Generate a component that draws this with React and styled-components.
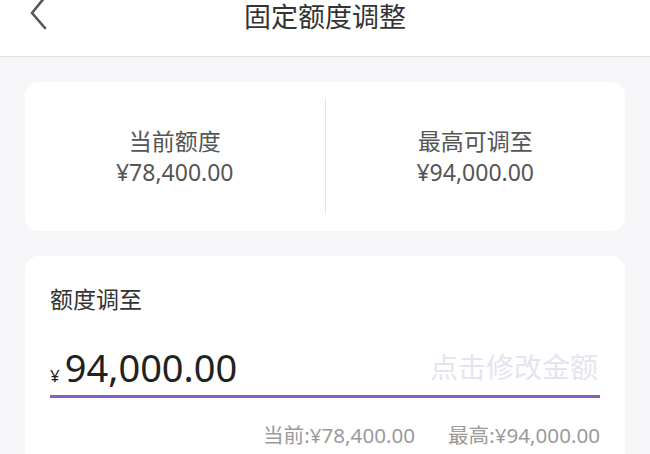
import React from 'react';
import styled, { createGlobalStyle } from 'styled-components';

const GlobalStyle = createGlobalStyle`
    html, body {
        margin: 0;
        padding: 0;
        background: #f6f5f8;
    }
    body {
        font-family: "Noto Sans", "Noto Sans CJK SC", sans-serif;
        overflow: hidden;
    }
`;

const Page = styled.div`
    width: 650px;
    height: 454px;
    background: #f6f5f8;
    overflow: hidden;
`;

const Header = styled.div`
    height: 56px;
    background: #fff;
    border-bottom: 1px solid #e2e2e4;
    display: grid;
    grid-template-columns: 1fr auto 1fr;
    align-items: start;
`;

const BackButton = styled.div`
    padding-left: 29px;
    margin-top: -4px;
    color: #555;
    display: flex;
`;

const Title = styled.h1`
    margin: 0;
    padding-top: 2px;
    font-size: 27px;
    font-weight: 400;
    line-height: 30px;
    color: #333;
`;

const Card = styled.div`
    margin: 25px 25px 0;
    background: #fff;
    border-radius: 14px;
`;

const SummaryCard = styled(Card)`
    height: 149px;
    display: grid;
    grid-template-columns: 1fr 1px 1fr;
`;

const Divider = styled.div`
    background: #e6e6e8;
    margin: 16px 0 17px;
`;

const Summary = styled.div`
    display: flex;
    flex-direction: column;
    align-items: center;
    justify-content: center;
    font-size: 23px;
    line-height: 31px;
    color: #555;
`;

const AdjustCard = styled(Card)`
    height: 240px;
    padding: 28px 25px 0;
`;

const Label = styled.div`
    font-size: 23px;
    line-height: 30px;
    color: #333;
`;

const AmountRow = styled.div`
    margin-top: 30px;
    padding-bottom: 5px;
    display: flex;
    align-items: center;
    justify-content: space-between;
    border-bottom: 3px solid #8a5cc6;
`;

const Amount = styled.div`
    display: flex;
    align-items: baseline;
    color: #222;
`;

const Yen = styled.span`
    font-size: 17px;
    margin-right: 5px;
`;

const Value = styled.span`
    font-size: 38px;
    line-height: 46px;
`;

const Placeholder = styled.span`
    font-size: 28px;
    line-height: 36px;
    margin-right: 2px;
    color: #e7e3ee;
`;

const Limits = styled.div`
    margin-top: 23px;
    display: flex;
    justify-content: flex-end;
    gap: 33px;
    font-size: 20.6px;
    line-height: 28px;
    color: #9a9a9a;
`;

const App = () => {
    return (
        <>
            <GlobalStyle />
            <Page>
                <Header>
                    <BackButton>
                        <svg width="20" height="34" viewBox="0 0 20 34" fill="none">
                            <path d="M16 1 L3 17 L16 32" stroke="currentColor" strokeWidth="2.6" strokeLinecap="round" strokeLinejoin="round" />
                        </svg>
                    </BackButton>
                    <Title>固定额度调整</Title>
                    <div />
                </Header>
                <SummaryCard>
                    <Summary>
                        <span>当前额度</span>
                        <span>¥78,400.00</span>
                    </Summary>
                    <Divider />
                    <Summary>
                        <span>最高可调至</span>
                        <span>¥94,000.00</span>
                    </Summary>
                </SummaryCard>
                <AdjustCard>
                    <Label>额度调至</Label>
                    <AmountRow>
                        <Amount>
                            <Yen>¥</Yen>
                            <Value>94,000.00</Value>
                        </Amount>
                        <Placeholder>点击修改金额</Placeholder>
                    </AmountRow>
                    <Limits>
                        <span>当前:¥78,400.00</span>
                        <span>最高:¥94,000.00</span>
                    </Limits>
                </AdjustCard>
            </Page>
        </>
    );
};

export default App;
